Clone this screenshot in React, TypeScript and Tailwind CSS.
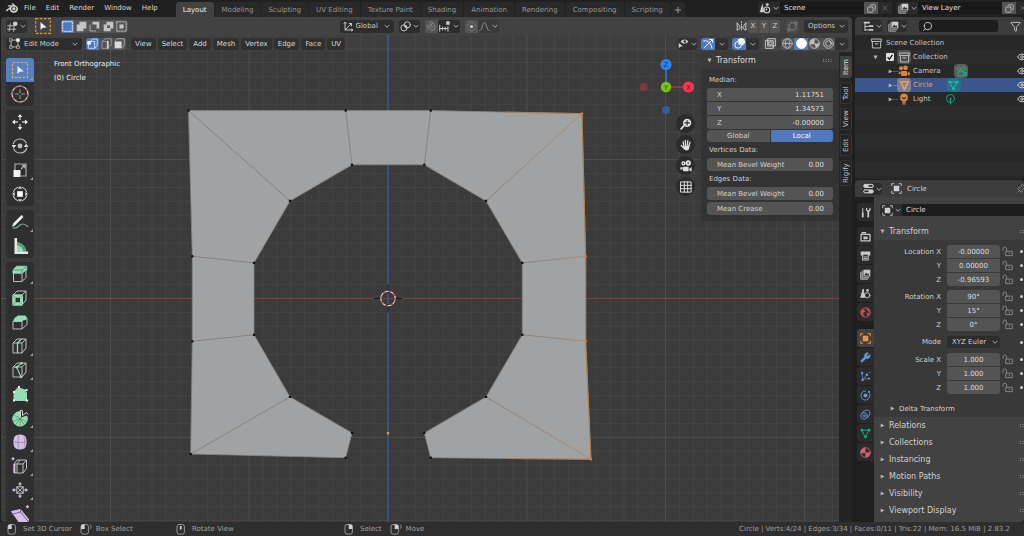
import React from 'react';
import { Copy, Eye, Filter, Magnet, Pin, Search, Wrench, X } from 'lucide-react';
import { SiBlender } from 'react-icons/si';

interface IconProps {
  className?: string;
  children: React.ReactNode;
}

// Base for the small 16 unit icons
const Icon = ({ className = 'size-[11px]', children }: IconProps) => (
  <svg
    viewBox="0 0 16 16"
    className={`shrink-0 ${className}`}
    fill="none"
    stroke="currentColor"
    strokeWidth="1.4"
    strokeLinecap="round"
    strokeLinejoin="round"
    aria-hidden="true"
  >
    {children}
  </svg>
);

const Chevron = ({ className = '' }: { className?: string }) => (
  <svg viewBox="0 0 8 8" className={`size-[6px] shrink-0 ${className}`} fill="none" stroke="#a8a8a8" strokeWidth="1.3" aria-hidden="true">
    <path d="M1 2.5 4 5.8 7 2.5" />
  </svg>
);

const Triangle = ({ open = false }: { open?: boolean }) => (
  <svg viewBox="0 0 6 6" className="size-[5px] shrink-0" fill="#b4b4b4" aria-hidden="true">
    {open ? <path d="M0.5 0.5H5.5L3 5.5Z" /> : <path d="M0.8 0.6 5.4 3 0.8 5.4Z" />}
  </svg>
);

const Grip = () => (
  <svg viewBox="0 0 10 4" className="h-[4px] w-[10px] shrink-0" fill="#8a8a8a" aria-hidden="true">
    {[0, 2.5, 5, 7.5].map((x) => (
      <React.Fragment key={x}>
        <rect x={x} y="0" width="1" height="1" />
        <rect x={x} y="2" width="1" height="1" />
      </React.Fragment>
    ))}
  </svg>
);

const SceneIcon = () => (
  <Icon className="size-[12px]">
    <path d="M4.5 2 1 13.5h6L4.5 2Z" fill="currentColor" stroke="none" />
    <circle cx="10.5" cy="10.5" r="3.8" />
    <circle cx="11" cy="3.4" r="1.9" fill="currentColor" stroke="none" />
    <circle cx="9.8" cy="10" r="1.2" fill="currentColor" stroke="none" />
  </Icon>
);

const LayersIcon = () => (
  <Icon>
    <path d="M1.2 5v9.8H11M3.2 3v9.8H13" strokeWidth="1.1" />
    <rect x="5" y="1" width="10" height="9.8" fill="currentColor" stroke="none" />
    <path d="m6 9.5 3-4.5 2 2.6 1.2-1.3L14 9.5Z" fill="#303030" stroke="none" />
  </Icon>
);

const ObjectIcon = ({ className }: { className?: string }) => (
  <Icon className={className}>
    <rect x="4" y="4" width="8" height="8" fill="currentColor" stroke="none" />
    <path d="M1 4V1h3M12 1h3v3M15 12v3h-3M4 15H1v-3" strokeWidth="1.2" />
  </Icon>
);

const CollectionIcon = () => (
  <Icon>
    <rect x="1" y="1.5" width="14" height="3.5" />
    <path d="M2 5v9.5h12V5M6 8.5h4" />
  </Icon>
);

const CameraIcon = ({ className }: { className?: string }) => (
  <Icon className={className}>
    <g fill="currentColor" stroke="none">
      <circle cx="4" cy="4.4" r="2.6" />
      <circle cx="10" cy="3.8" r="3.2" />
      <rect x="4" y="8" width="8" height="6.5" rx="1" />
      <path d="m12.5 10.5 3-2v6l-3-2ZM3.4 9.5 1 8.2v4.6l2.4-1.2Z" />
    </g>
  </Icon>
);

const CameraDataIcon = () => (
  <Icon>
    <circle cx="4" cy="4.6" r="2.4" />
    <circle cx="10.5" cy="4" r="3" />
    <path d="M3.5 8.5h8v6h-8ZM11.5 11l3.5-2v5.5l-3.5-2" />
  </Icon>
);

const MeshIcon = ({ className }: { className?: string }) => (
  <Icon className={className}>
    <path d="M3 3.2h10L8 13Z" />
    <g fill="currentColor" stroke="none">
      <circle cx="2.8" cy="3" r="2" />
      <circle cx="13.2" cy="3" r="2" />
      <circle cx="8" cy="13" r="2" />
    </g>
  </Icon>
);

const VertexBoxIcon = () => (
  <Icon className="size-[11px]">
    <rect x="3" y="3" width="10" height="10" strokeDasharray="2.5 1.5" />
    <path d="M1 1h3.5v3.5H1ZM1 11.5h3.5V15H1ZM11.5 11.5H15V15h-3.5Z" strokeWidth="1" fill="#2d2d2d" />
    <rect x="10.5" y="0.5" width="5" height="5" fill="#f0f0f0" stroke="none" />
  </Icon>
);

const LockIcon = () => (
  <Icon className="size-[11px] text-[#858585]">
    <rect x="6" y="7.5" width="9" height="6.5" />
    <path d="M1.5 6.5V4.2a2.6 2.6 0 0 1 5.2 0v3M10.5 10v1.5" />
  </Icon>
);

interface IconButtonProps {
  label: string;
  className: string;
  children: React.ReactNode;
}

const IconButton = ({ label, className, children }: IconButtonProps) => (
  <button type="button" aria-label={label} className={`flex h-3 shrink-0 items-center justify-center ${className}`}>
    {children}
  </button>
);

/* ---------- top bar ---------- */

const MENUS = ['File', 'Edit', 'Render', 'Window', 'Help'];
const WORKSPACES = [
  'Layout', 'Modeling', 'Sculpting', 'UV Editing', 'Texture Paint',
  'Shading', 'Animation', 'Rendering', 'Compositing', 'Scripting',
];

interface DataSelectorProps {
  label: string;
  value: string;
  icon: React.ReactNode;
}

const DataSelector = ({ label, value, icon }: DataSelectorProps) => (
  <div className="flex h-3 shrink-0 overflow-hidden rounded-[3px]">
    <IconButton label={`Browse ${label}`} className="w-[22px] gap-[2px] bg-[#2a2a2a]">
      {icon}
      <Chevron />
    </IconButton>
    <input aria-label={label} defaultValue={value} className="h-3 w-[84px] bg-[#191919] px-1 text-[#e0e0e0] outline-none" />
    <IconButton label={`New ${label}`} className="w-[14px] bg-[#545454]">
      <Copy className="size-[9px] -scale-x-100" />
    </IconButton>
    <IconButton label={`Remove ${label}`} className="w-[14px] bg-[#2a2a2a] text-[#707070]">
      <X className="size-[8px]" />
    </IconButton>
  </div>
);

const TopBar = () => (
  <header className="flex h-[17px] shrink-0 items-end overflow-hidden bg-[#202020]">
    <nav className="flex h-full items-center pb-[2px] pl-[6px]">
      <SiBlender className="mr-[1px] size-3 text-[#d0d0d0]" />
      {MENUS.map((menu) => (
        <button key={menu} type="button" className="px-[5px] text-[#d8d8d8]">
          {menu}
        </button>
      ))}
    </nav>
    <div className="ml-[13px] flex gap-px">
      {WORKSPACES.map((name) => (
        <button
          key={name}
          type="button"
          className={
            name === 'Layout'
              ? 'h-[15px] rounded-t-[3px] bg-[#424242] px-[7px] text-[#f0f0f0]'
              : 'h-[15px] rounded-t-[3px] bg-[#292929] px-[7px] text-[#959595]'
          }
        >
          {name}
        </button>
      ))}
      <button type="button" aria-label="Add workspace" className="flex h-[15px] w-[14px] items-center justify-center rounded-t-[3px] bg-[#292929]">
        <svg viewBox="0 0 8 8" className="size-2" stroke="#959595" strokeWidth="1">
          <path d="M4 1v6M1 4h6" />
        </svg>
      </button>
    </div>
    <div className="ml-auto flex h-full w-[266px] gap-1 overflow-hidden pt-[2px]">
      <DataSelector label="Scene" value="Scene" icon={<SceneIcon />} />
      <DataSelector label="View Layer" value="View Layer" icon={<LayersIcon />} />
    </div>
  </header>
);

/* ---------- 3D viewport headers ---------- */

const SelectModes = () => (
  <div className="flex h-[13px] overflow-hidden rounded-[3px] bg-[#545454] text-[#c4c4c4]">
    <button type="button" aria-label="Set selection" className="flex w-[13px] items-center justify-center bg-[#5079be]">
      <Icon><rect x="1" y="1" width="14" height="14" stroke="#dfe8ff" strokeDasharray="2 1.8" /></Icon>
    </button>
    <button type="button" aria-label="Extend selection" className="flex w-[14px] items-center justify-center">
      <Icon><path d="M5 1h10v10h-4v4H1V5h4Z" fill="currentColor" stroke="none" /></Icon>
    </button>
    <button type="button" aria-label="Subtract selection" className="flex w-[13px] items-center justify-center">
      <Icon>
        <path d="M5 1h10v10h-4V5H5Z" fill="currentColor" stroke="none" />
        <path d="M1.5 6v8.5H10" strokeDasharray="1.8 1.8" />
      </Icon>
    </button>
    <button type="button" aria-label="Invert selection" className="flex w-[14px] items-center justify-center">
      <Icon><path d="M5 1h10v10h-4v4H1V5h4ZM6 6v4h4V6Z" fill="currentColor" fillRule="evenodd" stroke="none" /></Icon>
    </button>
    <button type="button" aria-label="Intersect selection" className="flex w-[13px] items-center justify-center">
      <Icon>
        <rect x="5" y="5" width="6" height="6" fill="currentColor" stroke="none" />
        <rect x="1.2" y="1.2" width="13.6" height="13.6" strokeDasharray="2 2" />
      </Icon>
    </button>
  </div>
);

const ToolHeader = () => (
  <div className="relative grid h-[18px] shrink-0 grid-cols-[1fr_auto_1fr] items-center rounded-t-[4px] bg-[#424242] pr-1 pl-[5px]">
    <div className="flex items-center">
      <IconButton label="Editor type" className="h-[13px] w-[21px] gap-[2px] rounded-[3px] bg-[#303030]">
        <Icon>
          <path d="M1 7h9M0 12h13M5 4 3 15M10.5 6 9.5 15" strokeWidth="1.2" />
          <circle cx="12" cy="4" r="3.4" fill="currentColor" stroke="none" />
        </Icon>
        <Chevron />
      </IconButton>
      <svg viewBox="0 0 16 16" className="ml-2 size-4" fill="none" aria-hidden="true">
        <rect x="0.7" y="0.7" width="14.6" height="14.6" stroke="#e39a26" strokeWidth="1.2" strokeDasharray="2.6 1.5" />
        <path d="M5.5 4v8l2.4-2.2 3.8-.3Z" fill="#f0f0f0" />
      </svg>
      <div className="ml-[10px]">
        <SelectModes />
      </div>
    </div>
    <div className="flex items-center gap-[5px] pr-4">
      <div className="relative flex h-[13px] w-[54px] items-center rounded-[3px] bg-[#2d2d2d]">
        <Icon className="absolute left-[3px] size-[11px]">
          <path d="M3 2v11h11M3 13 12 4M1.5 3.5 3 1.5l1.5 2M12.5 11.5l2 1.5-2 1.5M9 3.6h3.4V7" />
        </Icon>
        <select aria-label="Transform orientation" className="h-full w-full appearance-none pl-4 outline-none">
          <option>Global</option>
        </select>
        <Chevron className="pointer-events-none absolute right-1" />
      </div>
      <IconButton label="Pivot point" className="h-[13px] w-[21px] gap-[2px] rounded-[3px] bg-[#2d2d2d]">
        <Icon>
          <circle cx="5.8" cy="10" r="4.5" />
          <circle cx="10.6" cy="5.6" r="4.5" />
          <circle cx="8.2" cy="7.8" r="1.4" fill="currentColor" stroke="none" />
        </Icon>
        <Chevron />
      </IconButton>
      <div className="flex overflow-hidden rounded-[3px]">
        <IconButton label="Snap" className="h-[13px] w-[13px] bg-[#545454]">
          <Magnet className="size-[10px] rotate-90 text-[#909090]" />
        </IconButton>
        <IconButton label="Snap target" className="h-[13px] w-[22px] gap-[3px] bg-[#2d2d2d]">
          <Icon>
            <path d="M1 6v9M1 11h12M5 9v4M9 9v4M13 8v7" />
            <rect x="10.5" y="0.5" width="5" height="5" fill="currentColor" stroke="none" />
          </Icon>
          <Chevron />
        </IconButton>
      </div>
      <div className="flex overflow-hidden rounded-[3px]">
        <IconButton label="Proportional editing" className="h-[13px] w-[13px] bg-[#545454]">
          <Icon>
            <circle cx="8" cy="8" r="6" stroke="#707070" />
            <circle cx="8" cy="8" r="2.2" fill="currentColor" stroke="none" />
          </Icon>
        </IconButton>
        <IconButton label="Falloff" className="h-[13px] w-[21px] gap-[2px] bg-[#3a3a3a] text-[#909090]">
          <Icon><path d="M1 14c4 0 4.2-12 7-12s3 12 7 12" /></Icon>
          <Chevron />
        </IconButton>
      </div>
    </div>
    <div className="flex items-center justify-end">
      <Icon className="size-[11px]">
        <path d="M8 1v14" strokeDasharray="1.5 2" />
        <path d="M5.5 8 1.5 2.5v5L3 8.5l-1.5 1v4L5.5 11ZM10.5 8l4-5.5v5L13 8.5l1.5 1v4L10.5 11Z" />
      </Icon>
      <div className="ml-px flex h-[13px] gap-px overflow-hidden rounded-[3px]">
        {['X', 'Y', 'Z'].map((axis) => (
          <button key={axis} type="button" className="w-[10px] bg-[#545454]">
            {axis}
          </button>
        ))}
      </div>
      <IconButton label="Auto merge" className="ml-[6px] h-[13px] w-[13px] rounded-[3px] bg-[#4c4c4c] text-[#888888]">
        <Icon>
          <path d="M3 5v8h8M5 3h8v8" strokeDasharray="2 1.6" />
          <path d="M1.5 11.5h3v3h-3ZM11.5 1.5h3v3h-3Z" fill="#4c4c4c" strokeWidth="1" />
        </Icon>
      </IconButton>
      <button type="button" className="ml-[5px] flex h-[13px] w-[44px] items-center justify-between rounded-[3px] bg-[#303030] pr-[3px] pl-1">
        Options
        <Chevron />
      </button>
    </div>
  </div>
);

const EDIT_MENUS = ['View', 'Select', 'Add', 'Mesh', 'Vertex', 'Edge', 'Face', 'UV'];

const EditHeader = () => (
  <div className="relative flex h-[17px] shrink-0 items-center justify-between bg-white/[0.02] pr-1 pl-[5px]">
    <div className="flex items-center gap-[2px]">
      <div className="relative mr-[2px] flex h-3 w-[76px] items-center rounded-[3px] bg-[#2d2d2d]">
        <span className="absolute left-[3px]"><VertexBoxIcon /></span>
        <select aria-label="Mode" className="h-full w-full appearance-none pl-[18px] outline-none">
          <option>Edit Mode</option>
        </select>
        <Chevron className="pointer-events-none absolute right-1" />
      </div>
      <div className="mr-[3px] flex overflow-hidden rounded-[3px] bg-[#545454]">
        <IconButton label="Vertex select" className="w-[13px] bg-[#5079be]">
          <Icon>
            <path d="M4 5h7v10H2V7M5 5l3-3.5h7v9L11.5 15" stroke="#c6d6f5" />
            <rect x="0.5" y="4.5" width="5" height="5" fill="#fff" stroke="none" />
          </Icon>
        </IconButton>
        <IconButton label="Edge select" className="w-[14px] text-[#959595]">
          <Icon>
            <path d="M2 5h7v10H2ZM2 5l4-4h9v9l-5 4" />
            <path d="M10 5v10" stroke="#e4e4e4" strokeWidth="2" />
          </Icon>
        </IconButton>
        <IconButton label="Face select" className="w-[13px] text-[#a5a5a5]">
          <Icon>
            <rect x="1" y="5" width="10" height="10" fill="#dcdcdc" stroke="none" />
            <path d="m2 4 3-3h10v9l-3 4" />
          </Icon>
        </IconButton>
      </div>
      {EDIT_MENUS.map((menu) => (
        <button key={menu} type="button" className="h-3 rounded-[3px] bg-[#303030] px-1 text-[#d8d8d8]">
          {menu}
        </button>
      ))}
    </div>
    <div className="flex items-center gap-1">
      <IconButton label="Object visibility" className="w-[20px] gap-[2px] rounded-[3px] bg-[#303030]">
        <Icon>
          <path d="M4 5c2-4 9-4 11 0-2 4-9 4-11 0Z" fill="currentColor" stroke="none" />
          <circle cx="10" cy="5" r="1.8" fill="#303030" stroke="none" />
          <path d="M1 7v8l2.4-2.4 3.6-.6Z" fill="currentColor" stroke="none" />
        </Icon>
        <Chevron />
      </IconButton>
      <div className="flex overflow-hidden rounded-[3px]">
        <IconButton label="Show gizmo" className="w-[14px] bg-[#5079be] text-white">
          <Icon><path d="M1 4c7-1 11 4 12 11M2 14 13 3M9.5 2.2H14V6.5" /></Icon>
        </IconButton>
        <IconButton label="Gizmo settings" className="w-[13px] bg-[#303030]"><Chevron /></IconButton>
      </div>
      <div className="flex overflow-hidden rounded-[3px]">
        <IconButton label="Show overlays" className="w-[14px] bg-[#5079be] text-white">
          <Icon>
            <circle cx="10.5" cy="5.5" r="4.8" fill="currentColor" />
            <circle cx="6" cy="10" r="4.8" fill="#5079be" />
            <circle cx="8.2" cy="7.8" r="2" fill="currentColor" stroke="none" />
          </Icon>
        </IconButton>
        <IconButton label="Overlay settings" className="w-[13px] bg-[#303030]"><Chevron /></IconButton>
      </div>
      <IconButton label="Toggle X-ray" className="w-[14px] rounded-[3px] bg-[#4a4a4a]">
        <Icon>
          <rect x="1" y="4" width="11" height="11" />
          <rect x="4.5" y="1" width="10.5" height="10.5" />
          <rect x="6" y="6" width="4" height="4" />
        </Icon>
      </IconButton>
      <div className="flex overflow-hidden rounded-[3px] bg-[#545454]">
        <IconButton label="Wireframe shading" className="w-[13px] text-[#b4b4b4]">
          <Icon><circle cx="8" cy="8" r="7" /><ellipse cx="8" cy="8" rx="3" ry="7" /><path d="M1 8h14" /></Icon>
        </IconButton>
        <IconButton label="Solid shading" className="w-[14px] bg-[#5079be] text-white">
          <Icon><circle cx="8" cy="8" r="7.2" fill="currentColor" /></Icon>
        </IconButton>
        <IconButton label="Material preview" className="w-[13px] text-[#bcbcbc]">
          <Icon><circle cx="8" cy="8" r="7" /><path d="M8 1a7 7 0 0 0-7 8h7ZM8 8h7a7 7 0 0 1-5 6.5Z" fill="currentColor" stroke="none" /></Icon>
        </IconButton>
        <IconButton label="Rendered shading" className="w-[14px] text-[#bcbcbc]">
          <Icon><circle cx="8" cy="8" r="7" /><circle cx="8" cy="8" r="4.2" /><path d="M9 5c2-1 3 1 2 3" /></Icon>
        </IconButton>
        <IconButton label="Shading settings" className="w-[13px] bg-[#303030]"><Chevron /></IconButton>
      </div>
    </div>
  </div>
);

/* ---------- toolbar ---------- */

const GREEN = '#94dcb4';
const PURPLE = '#d4bfe6';
const CUBE = 'M2 6h9v10H2ZM2 6l4-4h9l-4 4M15 2v9l-4 5';

const TOOLS: Record<string, React.ReactNode> = {
  'Select Box': (
    <>
      <rect x="1.5" y="1.5" width="15" height="15" stroke="#e9ac3f" strokeWidth="1.2" strokeDasharray="2.6 1.4" />
      <path d="M6.5 5v8l2.4-2.4 3.9-.2Z" fill="#f0f0f0" stroke="none" />
    </>
  ),
  Cursor: (
    <>
      <circle cx="9" cy="9" r="8" stroke="#dcdcdc" strokeWidth="1.2" />
      <circle cx="9" cy="9" r="8" stroke="#b04a49" strokeWidth="1.2" strokeDasharray="3.1 3.2" />
      <path d="M9 4v4M9 10v4M4 9h4M10 9h4" stroke="#9a9a9a" />
    </>
  ),
  Move: (
    <>
      <path d="M9 4v3M9 11v3M4 9h3M11 9h3" strokeWidth="1.4" />
      <path d="m9 1 2.4 3H6.6ZM9 17l-2.4-3h4.8ZM1 9l3-2.4v4.8ZM17 9l-3 2.4V6.6Z" fill="#e6e6e6" stroke="none" />
    </>
  ),
  Rotate: (
    <>
      <path d="M2.2 7A7 7 0 0 1 15.4 6.4M15.8 11A7 7 0 0 1 2.6 11.6" strokeWidth="1.2" />
      <path d="M0.6 8h4.6L2.8 11.2ZM12.8 10h4.6L15.2 6.8Z" fill="#e6e6e6" stroke="none" />
      <circle cx="9" cy="9" r="2.4" fill="#bdbdbd" stroke="none" />
    </>
  ),
  Scale: (
    <>
      <path d="M4 9V3h11v12h-5" stroke="#a8a8a8" strokeWidth="1.2" />
      <rect x="2.5" y="9" width="7" height="7" fill="#f0f0f0" stroke="none" />
      <path d="m10 8 3.5-3.5M10.8 4.3h3v3" strokeWidth="1.1" />
    </>
  ),
  Transform: (
    <>
      <circle cx="9" cy="9" r="7" strokeWidth="1.1" />
      <path d="m9 1 2.4 3H6.6ZM9 17l-2.4-3h4.8ZM1 9l3-2.4v4.8ZM17 9l-3 2.4V6.6Z" fill="#e6e6e6" stroke="#2f2f2f" strokeWidth="0.6" />
      <rect x="6.2" y="6.2" width="5.6" height="5.6" fill="#fff" stroke="none" />
    </>
  ),
  Annotate: (
    <>
      <path d="M3 11.5 11.5 3" stroke="#f0f0f0" strokeWidth="2.6" />
      <path d="m1.4 13.2 1-2.2 1.4 1.4Z" fill="#f0f0f0" stroke="#f0f0f0" strokeWidth="0.6" />
      <path d="M1.5 14.5c5 3 6-3.5 10-3.5 3 0 4 2 6 2.5" stroke="#6fae8e" strokeWidth="1.2" />
    </>
  ),
  Measure: (
    <>
      <path d="M6 5.5A9.5 9.5 0 0 1 15 14.5H6Z" fill="#5c9a7b" stroke="#5c9a7b" />
      <path d="M6 8.5a6 6 0 0 1 6 6H6Z" fill={GREEN} stroke="none" />
      <path d="M3.5 1h2.6v13.5h11V17H3.5Z" fill="#e6e6e6" stroke="none" />
    </>
  ),
  'Extrude Region': (
    <>
      <path d="M2.5 8h8.5v8.5H2.5ZM15 4v8.5l-4 4" />
      <path d="M2 5 5.5 1.3h10.2v3L11.5 8H2Z" fill={GREEN} stroke={GREEN} />
      <path d="M2 5h9l4.5-3.5M11 5v3" stroke="#4f7f66" strokeWidth="0.8" />
    </>
  ),
  'Inset Faces': (
    <>
      <path d={CUBE} />
      <rect x="2" y="6" width="9.5" height="10" fill={GREEN} stroke={GREEN} />
      <rect x="4.6" y="8.8" width="4.4" height="4.4" fill="#2f2f2f" stroke="none" />
      <path d="m2 6 2.6 2.8M11.5 6 9 8.8M2 16l2.6-2.8M11.5 16 9 13.2" stroke="#5c9a7b" strokeWidth="0.7" />
    </>
  ),
  Bevel: (
    <>
      <path d="M2 8.5h9V16H2ZM16 5v6.5L11 16" />
      <path d="M2 8.5 3.5 5 7 2.5h7l2 2.5-5 3.5Z" fill={GREEN} stroke="none" />
      <circle cx="13.5" cy="5" r="2.2" fill={GREEN} stroke="none" />
    </>
  ),
  'Loop Cut': (
    <>
      <path d={CUBE} />
      <path d="M6.5 16V6l4-4" stroke={GREEN} strokeWidth="1.3" />
    </>
  ),
  Knife: (
    <>
      <path d={CUBE} />
      <path d="M11 2 5.5 6 10 16" stroke={GREEN} strokeWidth="1.1" />
      <circle cx="10.5" cy="2.2" r="1.2" fill={GREEN} stroke="none" />
      <circle cx="5.5" cy="6.2" r="1.2" fill={GREEN} stroke="none" />
      <circle cx="10" cy="16" r="1.2" fill={GREEN} stroke="none" />
    </>
  ),
  'Poly Build': (
    <>
      <path d="M3 15.5V7l4-4.5 7 2.5 1.5 3v7.5Z" fill={GREEN} stroke={GREEN} />
      <path d="M2 14.5h2v2H2ZM15 14.5h2v2h-2ZM2 6h2v2H2ZM7 1h2v2H7ZM14.5 4h2v2h-2Z" fill="#f0f0f0" stroke="none" />
    </>
  ),
  Spin: (
    <>
      <path d="M9 9.5V2.5A7.3 7.3 0 1 0 15.8 7Z" fill={GREEN} stroke={GREEN} />
      <path d="M9 9.5 2.5 6M9 9.5l-7 3M9 9.5v7M9 9.5l6.5 3.5M9 9.5l-4 6M9 9.5l4 6" stroke="#4c7a63" strokeWidth="0.6" />
      <path d="M9.5 8.5V1.2l2 .6v4.7l4-3 1.5 2" stroke="#cfcfcf" />
    </>
  ),
  Smooth: (
    <>
      <path d="M4 3.5c3-2 7-2 10 0 1.5 3 1.5 8 0 11-3 2-7 2-10 0-1.5-3-1.5-8 0-11Z" fill={PURPLE} stroke={PURPLE} />
      <path d="M8 2.5c-1.5 4-1.5 9 0 13M2.5 8.5c4 1.5 9 1.5 13 0M13 3.5c1 4 1 8 0 11" stroke="#8d7b9e" strokeWidth="0.7" />
    </>
  ),
  'Edge Slide': (
    <>
      <path d="M3 7h9v9H3ZM3 7l3-4h9.5L12 7M15.5 3v8.5L12 16" />
      <path d="M6 16V7l3-4" />
      <path d="M3.5 16V7" stroke={PURPLE} strokeWidth="1.8" />
      <path d="m2 0 1.8 1.8L2 3.6.2 1.8Z" fill={PURPLE} stroke="none" />
    </>
  ),
  'Shrink/Fatten': (
    <>
      <rect x="5.8" y="5.8" width="6.4" height="6.4" strokeWidth="1.1" />
      <path d="m6 6 6 6M12 6l-6 6" strokeWidth="0.9" />
      <path d="M9 3v2M9 13v2M3 9h2M13 9h2" stroke={PURPLE} />
      <path d="m9 0.8 2 2.8H7ZM9 17.2l-2-2.8h4ZM0.8 9l2.8-2v4ZM17.2 9l-2.8 2V7Z" fill={PURPLE} stroke="none" />
    </>
  ),
  Shear: (
    <>
      <path d="M0.5 6.5 9.5 4.5l9 11-9 3.5Z" fill={PURPLE} stroke={PURPLE} />
      <path d="m0.5 9.5 9-2.5 9 11M9.5 7V4.5" stroke="#6d5c7e" strokeWidth="0.9" />
      <path d="m16.5 0 1.8 1.8-1.8 1.8-1.8-1.8Z" fill={PURPLE} stroke="none" />
    </>
  ),
};

const TOOL_GROUPS = [
  ['Select Box', 'Cursor'],
  ['Move', 'Rotate', 'Scale', 'Transform'],
  ['Annotate', 'Measure'],
  [
    'Extrude Region', 'Inset Faces', 'Bevel', 'Loop Cut', 'Knife', 'Poly Build',
    'Spin', 'Smooth', 'Edge Slide', 'Shrink/Fatten', 'Shear',
  ],
];
const HAS_VARIANTS = [
  'Select Box', 'Scale', 'Annotate', 'Extrude Region', 'Loop Cut', 'Knife',
  'Spin', 'Smooth', 'Edge Slide', 'Shrink/Fatten',
];

const Toolbar = () => (
  <div className="relative ml-[5px] flex w-7 shrink-0 flex-col gap-1 overflow-hidden pt-[6px]">
    {TOOL_GROUPS.map((group) => (
      <div key={group[0]} className="flex shrink-0 flex-col overflow-hidden rounded-[3px] bg-[#2f2f2f]">
        {group.map((tool) => (
          <button
            key={tool}
            type="button"
            aria-label={tool}
            className={
              tool === 'Select Box'
                ? 'relative flex h-6 items-center justify-center bg-[#5680c2]'
                : 'relative flex h-6 items-center justify-center'
            }
          >
            <svg viewBox="0 0 18 18" className="size-[18px]" fill="none" stroke="#bcbcbc" strokeWidth="1">
              {TOOLS[tool]}
            </svg>
            {HAS_VARIANTS.includes(tool) && (
              <svg viewBox="0 0 3 3" className="absolute right-[1px] bottom-[2px] size-[3px]" fill="#9a9a9a">
                <path d="M3 0v3H0Z" />
              </svg>
            )}
          </button>
        ))}
      </div>
    ))}
  </div>
);

/* ---------- mesh on the canvas ---------- */

// Positions are in pixels from the 3D cursor
const OUTLINE: [number, number][] = [
  [-199.5, -187.9], [-42.3, -187.9], [42.7, -187.9], [194, -184.9], [197.7, -42.2], [197.7, 42.8],
  [203, 160.8], [42.7, 159.2], [36.3, 134.4], [98, 98.4], [134.3, 36.3], [134.3, -35.6],
  [98, -97.6], [36.3, -133.7], [-36, -133.7], [-98, -97.6], [-134, -35.6], [-134, 36.3],
  [-98, 98.4], [-36, 134.4], [-42.3, 159.2], [-197.3, 155.5], [-195.7, 42.8], [-195.7, -42.2],
];
const INNER_EDGES = [[0, 15], [1, 14], [2, 13], [23, 16], [22, 17], [21, 18]];
const SELECTED_EDGES = [[3, 12], [4, 11], [5, 10], [6, 9]];
const SELECTED = [3, 4, 5, 6];
const GRID_STEP = 13.88;
const GRID_LINES = Array.from({ length: 161 }, (_, i) => i - 80);

const Canvas = () => (
  <svg className="absolute inset-0 h-full w-full" aria-hidden="true">
    <defs>
      {SELECTED_EDGES.map(([a, b]) => (
        <linearGradient
          key={a}
          id={`edge-${a}`}
          gradientUnits="userSpaceOnUse"
          x1={OUTLINE[a][0]}
          y1={OUTLINE[a][1]}
          x2={OUTLINE[b][0]}
          y2={OUTLINE[b][1]}
        >
          <stop offset="0" stopColor="#b58355" />
          <stop offset="1" stopColor="#7c7c7c" />
        </linearGradient>
      ))}
    </defs>
    <g transform="translate(388 281.5)">
      {GRID_LINES.map((i) => (
        <path
          key={i}
          d={`M${i * GRID_STEP} -1200V1200M-1200 ${i * GRID_STEP}H1200`}
          stroke={i % 10 === 0 ? '#4f4f4f' : '#454545'}
          strokeWidth="1"
        />
      ))}
      <path d="M-1200 0H1200" stroke="#8a3b44" />
      <path d="M0 -1200V1200" stroke="#34598c" strokeWidth="1.4" />
      <polygon points={OUTLINE.map((p) => p.join(',')).join(' ')} fill="#a1a2a3" stroke="#858585" strokeWidth="0.8" />
      {INNER_EDGES.map(([a, b]) => (
        <line key={a} x1={OUTLINE[a][0]} y1={OUTLINE[a][1]} x2={OUTLINE[b][0]} y2={OUTLINE[b][1]} stroke="#7c7c7c" strokeWidth="0.8" />
      ))}
      {SELECTED_EDGES.map(([a, b]) => (
        <line key={a} x1={OUTLINE[a][0]} y1={OUTLINE[a][1]} x2={OUTLINE[b][0]} y2={OUTLINE[b][1]} stroke={`url(#edge-${a})`} strokeWidth="0.8" />
      ))}
      <path d="M118 -186.4 194 -184.9 197.7 -42.2V42.8L203 160.8 120 160" fill="none" stroke="#b97f45" strokeWidth="0.9" />
      {OUTLINE.map(([x, y], i) => (
        <rect key={i} x={x - 1.1} y={y - 1.1} width="2.2" height="2.2" fill={SELECTED.includes(i) ? '#ee7d17' : '#0d0d0d'} />
      ))}
      <rect x="-1.2" y="133.4" width="2.4" height="2.4" fill="#f09530" />
      <path d="M-14 0h8.5M5.5 0H14M0 -14v8.5M0 5.5V14" stroke="#161616" />
      <circle r="7.2" fill="none" stroke="#e8e8e8" strokeWidth="1.1" />
      <circle r="7.2" fill="none" stroke="#d2322f" strokeWidth="1.1" strokeDasharray="2.83 2.82" />
    </g>
  </svg>
);

/* ---------- gizmo, sidebar ---------- */

const NAV_BUTTONS: { name: string; icon: React.ReactNode }[] = [
  {
    name: 'Zoom',
    icon: (
      <>
        <circle cx="9.5" cy="6.5" r="5.5" fill="currentColor" stroke="none" />
        <path d="M9.5 3.5v6M6.5 6.5h6" stroke="#2b2b2b" />
        <path d="m1.5 14.5 3.5-4" strokeWidth="2.4" />
      </>
    ),
  },
  {
    name: 'Pan',
    icon: (
      <>
        <path d="M5 9 4.2 4M7.4 8 7 2M9.8 8l.6-5.8M12 9l1.4-4.8M1.6 8.6 5.4 12.5" strokeWidth="1.7" />
        <path d="M4.4 8.6h8.4l-.6 4c-.5 1.6-1.5 2.6-3.4 2.6s-3-.8-4-2.4Z" fill="currentColor" stroke="none" />
      </>
    ),
  },
  {
    name: 'Camera view',
    icon: (
      <>
        <g fill="currentColor" stroke="none">
          <circle cx="4.5" cy="4.5" r="2.8" />
          <circle cx="11" cy="4" r="3.6" />
          <rect x="4" y="9" width="7.5" height="6" rx="1" />
          <path d="m12.3 11.5 3.2-2v6l-3.2-2ZM0.5 9.5h3v3h-3Z" />
        </g>
        <circle cx="11" cy="4" r="1.1" fill="#2b2b2b" stroke="none" />
        <circle cx="4.5" cy="4.5" r="0.9" fill="#2b2b2b" stroke="none" />
      </>
    ),
  },
  {
    name: 'Toggle perspective',
    icon: <path d="M1.2 1.2h13.6v13.6H1.2ZM5.8 1.2v13.6M10.2 1.2v13.6M1.2 5.8h13.6M1.2 10.2h13.6" strokeWidth="1.3" />,
  },
];

const NavigationGizmo = () => (
  <div className="relative flex w-[63px] shrink-0 flex-col">
    <svg viewBox="0 0 60 64" className="mt-[5px] h-16 w-[60px]" fontFamily="DejaVu Sans, sans-serif" fontSize="7" textAnchor="middle" aria-hidden="true">
      <path d="M28 30V8" stroke="#2f7fe0" strokeWidth="1.4" />
      <path d="M28 30h22" stroke="#b82f45" strokeWidth="1.4" />
      <circle cx="5.5" cy="30" r="4" fill="#853741" />
      <circle cx="28" cy="53" r="4" fill="#335d94" />
      <circle cx="28" cy="7.5" r="5.6" fill="#2b83f0" />
      <circle cx="28" cy="30" r="5.2" fill="#7cc20a" />
      <circle cx="50.5" cy="30" r="5.6" fill="#f73453" />
      <text x="28" y="10" fill="#123d75">Z</text>
      <text x="28" y="32.5" fill="#2f5000">Y</text>
      <text x="50.5" y="32.5" fill="#7a1526">X</text>
    </svg>
    <div className="-mt-[7px] ml-[38px] flex flex-col gap-[2px]">
      {NAV_BUTTONS.map((button) => (
        <button key={button.name} type="button" aria-label={button.name} className="flex size-[19px] items-center justify-center rounded-full bg-[#2b2b2b] text-[#dedede]">
          <Icon className="size-3">{button.icon}</Icon>
        </button>
      ))}
    </div>
  </div>
);

const SliderField = ({ label, value }: { label: string; value: string }) => (
  <label className="flex h-[13px] items-center bg-[#545454] pr-[9px] pl-[10px] first:rounded-t-[3px] last:rounded-b-[3px]">
    <span className="flex-1 whitespace-nowrap">{label}</span>
    <input defaultValue={value} className="w-9 text-right text-[#dedede] outline-none" />
  </label>
);

const TransformPanel = () => (
  <section className="w-[138px] shrink-0 self-start rounded-b-[3px] bg-[#333333] text-[#d0d0d0]">
    <div className="flex h-[17px] items-center bg-[#3a3a3a] pr-[6px] pl-[6px] text-[#dcdcdc]">
      <Triangle open />
      <h2 className="ml-1 flex-1 text-[8px]">Transform</h2>
      <Grip />
    </div>
    <div className="flex flex-col px-[6px] pb-[6px]">
      <p className="pt-[7px] pb-1 pl-[2px] leading-[8px]">Median:</p>
      <div className="flex flex-col gap-px">
        <SliderField label="X" value="1.11751" />
        <SliderField label="Y" value="1.34573" />
        <SliderField label="Z" value="-0.00000" />
      </div>
      <div className="mt-px flex h-3 gap-px overflow-hidden rounded-[3px]">
        <button type="button" className="flex-1 bg-[#545454]">Global</button>
        <button type="button" className="flex-1 bg-[#5079be] text-white">Local</button>
      </div>
      <p className="pt-1 pb-1 pl-[2px] leading-[8px]">Vertices Data:</p>
      <div><SliderField label="Mean Bevel Weight" value="0.00" /></div>
      <p className="pt-1 pb-1 pl-[2px] leading-[8px]">Edges Data:</p>
      <div><SliderField label="Mean Bevel Weight" value="0.00" /></div>
      <div className="mt-[2px]"><SliderField label="Mean Crease" value="0.00" /></div>
    </div>
  </section>
);

const SIDE_TABS = [
  { name: 'Item', className: 'h-[22px] bg-[#424242] text-[#e0e0e0]' },
  { name: 'Tool', className: 'h-[22px] border border-[#353535]' },
  { name: 'View', className: 'h-[22px] border border-[#353535]' },
  { name: 'Edit', className: 'h-[22px] border border-[#353535]' },
  { name: 'Rigify', className: 'h-[26px] border border-[#353535]' },
];

const SideTabs = () => (
  <div className="flex w-[13px] shrink-0 flex-col gap-1 bg-[#242424] pt-1 pl-px text-[#c4c4c4]">
    {SIDE_TABS.map((tab) => (
      <button
        key={tab.name}
        type="button"
        className={`flex w-3 shrink-0 rotate-180 items-center justify-center rounded-l-[3px] [writing-mode:vertical-rl] ${tab.className}`}
      >
        {tab.name}
      </button>
    ))}
  </div>
);

const Viewport = () => (
  <main className="relative ml-px flex min-w-0 flex-1 flex-col overflow-hidden rounded-[4px] bg-[#3b3b3b]">
    <div className="absolute inset-0 -ml-px"><Canvas /></div>
    <ToolHeader />
    <div className="relative flex min-h-0 flex-1 flex-col">
      <EditHeader />
      <div className="flex min-h-0 flex-1">
        <Toolbar />
        <div className="relative min-w-0 flex-1 pt-[7px] pl-5 text-[#f0f0f0]">
          <p className="leading-[10px]">Front Orthographic</p>
          <p className="mt-1 leading-[10px]">(0) Circle</p>
        </div>
        <NavigationGizmo />
        <TransformPanel />
        <SideTabs />
      </div>
    </div>
  </main>
);

/* ---------- outliner ---------- */

const EyeButton = () => (
  <button type="button" aria-label="Hide in viewport" className="absolute right-[-3px] text-[#c8c8c8]">
    <Eye className="size-[10px]" strokeWidth={2.4} />
  </button>
);

const OutlinerHeader = () => (
  <div className="flex h-[18px] shrink-0 items-center overflow-hidden rounded-t-[4px] bg-[#3c3c3c] pl-[7px]">
    <IconButton label="Editor type" className="w-[20px] gap-[2px] rounded-[3px] bg-[#2d2d2d]">
      <Icon>
        <path d="M3 3v11M3 8h4M3 13h4" />
        <path d="M1 2.5h9M8 7.5h7M8 13h7" strokeWidth="2.6" strokeLinecap="butt" />
      </Icon>
      <Chevron />
    </IconButton>
    <IconButton label="Display mode" className="ml-[5px] w-[20px] gap-[2px] rounded-[3px] bg-[#2d2d2d]">
      <LayersIcon />
      <Chevron />
    </IconButton>
    <label className="ml-3 flex h-3 w-[79px] shrink-0 items-center rounded-[3px] bg-[#1d1d1d] pl-[3px]">
      <Search className="size-[11px] -scale-x-100" />
      <input type="search" aria-label="Filter" className="min-w-0 flex-1 outline-none" />
    </label>
    <button type="button" aria-label="Filter settings" className="ml-3 shrink-0">
      <Filter className="size-[11px]" />
    </button>
  </div>
);

const Outliner = () => (
  <section className="flex h-[162px] shrink-0 flex-col overflow-hidden rounded-[4px] bg-[#282828]">
    <OutlinerHeader />
    <ul className="flex flex-1 flex-col pt-px text-[#c4c4c4] *:relative *:flex *:h-[14px] *:shrink-0 *:items-center">
      <li className="pl-4">
        <CollectionIcon />
        <span className="ml-1">Scene Collection</span>
      </li>
      <li className="bg-[#2c2c2c] pl-[18px]">
        <Triangle open />
        <span className="relative ml-2 flex size-2">
          <input type="checkbox" defaultChecked aria-label="Collection" className="size-2 appearance-none rounded-[1px] bg-[#e0e0e0]" />
          <svg viewBox="0 0 8 8" className="pointer-events-none absolute inset-0 size-2" fill="none" stroke="#1a1a1a" strokeWidth="1.3">
            <path d="m1.6 4.2 1.8 2 3-4.4" />
          </svg>
        </span>
        <span className="ml-[3px] flex size-[14px] items-center justify-center rounded-[3px] bg-[#4e4e4e]"><CollectionIcon /></span>
        <span className="ml-[2px]">Collection</span>
        <EyeButton />
      </li>
      <li className="pl-[33px]">
        <Triangle />
        <span className="h-px w-[5px] bg-[#555555]" />
        <span className="text-[#d98440]"><CameraIcon className="size-3" /></span>
        <span className="ml-[3px]">Camera</span>
        <span className="ml-[14px] flex size-[14px] items-center justify-center rounded-[4px] bg-[#5b5b5b] text-[#17b389]">
          <CameraDataIcon />
        </span>
        <EyeButton />
      </li>
      <li className="bg-[#3b568c] pl-[33px]">
        <Triangle />
        <span className="h-px w-[4px] bg-[#7080a0]" />
        <span className="flex size-[14px] items-center justify-center rounded-[3px] bg-[#7b8196] text-[#f09a5c]">
          <Icon><path d="M2.5 2.5h11L8 14Z" strokeWidth="2.4" /></Icon>
        </span>
        <span className="ml-[2px] text-[#eca244]">Circle</span>
        <span className="ml-[14px] flex size-[14px] items-center justify-center rounded-[4px] bg-[#2c6f8b] text-[#12c79c]">
          <MeshIcon />
        </span>
        <EyeButton />
      </li>
      <li className="pl-[33px]">
        <Triangle />
        <span className="h-px w-[5px] bg-[#555555]" />
        <span className="text-[#d98440]">
          <Icon className="size-3">
            <circle cx="8" cy="6" r="5.2" fill="currentColor" stroke="none" />
            <path d="M6 12.2h4M6.6 14.6h2.8" strokeWidth="1.6" />
            <path d="M6 6c1 2 3 2 4 0" stroke="#282828" />
          </Icon>
        </span>
        <span className="ml-[3px]">Light</span>
        <span className="ml-[15px] text-[#17a67e]">
          <Icon><circle cx="8" cy="6.5" r="5.8" /><path d="M8 8v7" /><circle cx="8" cy="7" r="1.5" fill="currentColor" stroke="none" /></Icon>
        </span>
        <EyeButton />
      </li>
      <li className="bg-[#2c2c2c]" />
      <li />
      <li className="bg-[#2c2c2c]" />
      <li />
      <li className="bg-[#2c2c2c]" />
    </ul>
  </section>
);

/* ---------- properties ---------- */

interface PropertyTab {
  name: string;
  className: string;
  icon: React.ReactNode;
}

const PROPERTY_TABS: PropertyTab[] = [
  {
    name: 'Tool',
    className: 'mt-[6px] bg-[#2b2b2b] text-[#c8c8c8]',
    icon: <><path d="M4 2v6" /><path d="M4 9v5M12 6v8" strokeWidth="2.6" /><path d="M9.5 2v2.5L12 6.5l2.5-2V2" strokeWidth="1.8" /></>,
  },
  {
    name: 'Render',
    className: 'mt-[5px] bg-[#2b2b2b] text-[#c8c8c8]',
    icon: <><rect x="1.5" y="5" width="13" height="9.5" strokeWidth="1.8" /><path d="M3 2.5h5" strokeWidth="2.4" /><rect x="5" y="8" width="6" height="4" fill="currentColor" stroke="none" /></>,
  },
  {
    name: 'Output',
    className: 'bg-[#2b2b2b] text-[#c8c8c8]',
    icon: <><path d="M1 2h14v6H1Z" fill="currentColor" stroke="none" /><path d="M4 7v7.5h8V7" strokeWidth="1.6" fill="#2b2b2b" /><path d="M6 10h4M6 12.3h4" /></>,
  },
  {
    name: 'View Layer',
    className: 'bg-[#2b2b2b] text-[#c8c8c8]',
    icon: <><path d="M1.2 5v9.8H11M3.2 3v9.8H13" /><rect x="5" y="1" width="10" height="9.8" fill="currentColor" stroke="none" /><path d="m6 9.5 3-4.5 2 2.6 1.2-1.3L14 9.5Z" fill="#303030" stroke="none" /></>,
  },
  {
    name: 'Scene',
    className: 'bg-[#2b2b2b] text-[#c8c8c8]',
    icon: <><path d="M4.5 2 1 13.5h6L4.5 2Z" fill="currentColor" /><circle cx="10.5" cy="10.5" r="3.8" /><circle cx="11" cy="3.4" r="1.9" fill="currentColor" stroke="none" /></>,
  },
  {
    name: 'World',
    className: 'bg-[#2b2b2b] text-[#c4535e]',
    icon: <><circle cx="8" cy="8" r="6.8" /><path d="M2.5 4.5c3-1 5 0 4.5 2s-3 1-3 3 2 2 2 4L2 11ZM10 1.8c-1 3 2 4 4.5 4.5L12.5 3ZM10 9c3-1 4 1 2 4Z" fill="currentColor" strokeWidth="1" /></>,
  },
  {
    name: 'Object',
    className: 'mt-[7px] bg-[#424242] text-[#ee9342]',
    icon: <><rect x="4" y="4" width="8" height="8" fill="currentColor" stroke="none" /><path d="M1 4V1h3M12 1h3v3M15 12v3h-3M4 15H1v-3" /></>,
  },
  { name: 'Modifiers', className: 'bg-[#2b2b2b] text-[#6795d6]', icon: null },
  {
    name: 'Particles',
    className: 'bg-[#2b2b2b] text-[#6795d6]',
    icon: <><path d="M4 12 3 4M4 12l8-1M4 12l6-6" strokeWidth="1" /><g fill="currentColor" stroke="none"><circle cx="3" cy="3" r="1.8" /><circle cx="3.6" cy="13" r="1.8" /><circle cx="10" cy="5.5" r="2" /><circle cx="13" cy="11" r="1.6" /><circle cx="14" cy="2" r="1" /></g></>,
  },
  {
    name: 'Physics',
    className: 'bg-[#2b2b2b] text-[#6795d6]',
    icon: <><path d="M14 5.5A6.6 6.6 0 1 1 8 1.4" /><circle cx="8" cy="8" r="3" fill="currentColor" stroke="none" /><circle cx="13" cy="2.8" r="1.6" fill="currentColor" stroke="none" /></>,
  },
  {
    name: 'Object Constraints',
    className: 'bg-[#2b2b2b] text-[#6795d6]',
    icon: <><circle cx="6" cy="10" r="4.8" /><circle cx="6" cy="10" r="1.5" /><path d="M3.5 5.5C5 1 13 0 14.5 4.5c.7 3-1.5 6-4 8" /></>,
  },
  {
    name: 'Object Data',
    className: 'bg-[#2b2b2b] text-[#10b283]',
    icon: <><path d="M3 3.2h10L8 13Z" /><g fill="currentColor" stroke="none"><circle cx="2.8" cy="3" r="2" /><circle cx="13.2" cy="3" r="2" /><circle cx="8" cy="13" r="2" /></g></>,
  },
  {
    name: 'Material',
    className: 'bg-[#2b2b2b] text-[#d4646d]',
    icon: <><circle cx="8" cy="8" r="7" /><path d="M8 1a7 7 0 0 0-7 8h7ZM8 8h7a7 7 0 0 1-7 7Z" fill="currentColor" stroke="none" /></>,
  },
];

const PropertyTabs = () => (
  <nav className="flex w-[17px] shrink-0 flex-col gap-px">
    {PROPERTY_TABS.map((tab) => (
      <button key={tab.name} type="button" aria-label={tab.name} className={`flex h-[18px] shrink-0 items-center justify-center rounded-l-[3px] ${tab.className}`}>
        {tab.icon ? <Icon>{tab.icon}</Icon> : <Wrench className="size-[11px]" fill="currentColor" />}
      </button>
    ))}
  </nav>
);

const VECTORS = {
  location: { label: 'Location', values: ['-0.00000', '0.00000', '-0.96593'] },
  rotation: { label: 'Rotation', values: ['90°', '15°', '0°'] },
  scale: { label: 'Scale', values: ['1.000', '1.000', '1.000'] },
};

const Dot = () => <span className="ml-auto size-[3px] shrink-0 rounded-full bg-[#c8c8c8]" />;

const VectorField = ({ label, values }: { label: string; values: string[] }) => (
  <div className="flex flex-col gap-px">
    {values.map((value, i) => (
      <div key={i} className="group flex h-[13px] items-center">
        <label className="flex h-full items-center">
          <span className="w-[67px] text-right">{i === 0 ? `${label} X` : 'XYZ'[i]}</span>
          <input
            defaultValue={value}
            className="ml-[6px] h-full w-[53px] bg-[#545454] text-center text-[#dedede] outline-none group-first:rounded-t-[3px] group-last:rounded-b-[3px]"
          />
        </label>
        <button type="button" aria-label={`Lock ${label} ${'XYZ'[i]}`} className="ml-[2px]"><LockIcon /></button>
        <Dot />
      </div>
    ))}
  </div>
);

const CLOSED_PANELS = ['Relations', 'Collections', 'Instancing', 'Motion Paths', 'Visibility', 'Viewport Display'];

const Properties = () => (
  <section className="mt-px flex min-h-0 flex-1 flex-col overflow-hidden rounded-[4px] bg-[#1f1f1f] text-[#d0d0d0]">
    <div className="flex h-[17px] shrink-0 items-center bg-[#3c3c3c] pl-2">
      <IconButton label="Editor type" className="w-[19px] gap-[2px] rounded-[3px] bg-[#2d2d2d]">
        <Icon>
          <rect x="1" y="2" width="14" height="4.5" rx="2" fill="currentColor" />
          <rect x="1" y="10" width="14" height="4.5" rx="2" fill="currentColor" />
          <path d="M9 4.2h4M3 12.2h4" stroke="#2d2d2d" strokeWidth="2.4" />
        </Icon>
        <Chevron />
      </IconButton>
      <span className="ml-[9px]"><ObjectIcon /></span>
      <span className="ml-[5px]">Circle</span>
      <button type="button" aria-label="Pin" className="-mr-[2px] ml-auto text-[#909090]"><Pin className="size-[10px] rotate-45" /></button>
    </div>
    <div className="flex min-h-0 flex-1 pl-[2px]">
      <PropertyTabs />
      <div className="flex min-w-0 flex-1 flex-col bg-[#424242]">
        <div className="mt-[7px] ml-[6px] flex h-3 shrink-0 overflow-hidden rounded-l-[3px]">
          <IconButton label="Browse object" className="w-[22px] gap-[2px] bg-[#2d2d2d]">
            <ObjectIcon />
            <Chevron />
          </IconButton>
          <input aria-label="Object name" defaultValue="Circle" className="h-3 min-w-0 flex-1 bg-[#1d1d1d] pl-1 text-[#dedede] outline-none" />
        </div>
        <div className="mt-[7px] flex h-[17px] shrink-0 items-center overflow-hidden pl-[6px]">
          <Triangle open />
          <h2 className="ml-1 flex-1 text-[8px]">Transform</h2>
          <span className="-mr-[6px]"><Grip /></span>
        </div>
        <div className="flex shrink-0 flex-col gap-1 bg-[#393939] pt-[5px] pr-[1px]">
          <VectorField {...VECTORS.location} />
          <VectorField {...VECTORS.rotation} />
          <div className="flex h-[14px] items-center">
            <label htmlFor="rotation-mode" className="w-[67px] text-right">Mode</label>
            <div className="relative ml-[6px] flex h-3 w-[53px] items-center rounded-[3px] bg-[#2d2d2d]">
              <select id="rotation-mode" className="h-full w-full appearance-none pl-[5px] outline-none">
                <option>XYZ Euler</option>
              </select>
              <Chevron className="pointer-events-none absolute right-[2px]" />
            </div>
            <Dot />
          </div>
          <VectorField {...VECTORS.scale} />
          <button type="button" className="mt-[2px] flex h-[17px] items-center gap-1 pl-4">
            <Triangle />
            Delta Transform
          </button>
        </div>
        {CLOSED_PANELS.map((panel) => (
          <button key={panel} type="button" className="flex h-[17px] shrink-0 items-center overflow-hidden pl-[6px] text-left text-[8px]">
            <Triangle />
            <span className="ml-1 flex-1">{panel}</span>
            <span className="-mr-[6px]"><Grip /></span>
          </button>
        ))}
      </div>
    </div>
  </section>
);

/* ---------- status bar ---------- */

const MouseIcon = ({ button, drag = false }: { button: 'left' | 'middle' | 'right'; drag?: boolean }) => (
  <svg viewBox="0 0 12 12" className="size-3 shrink-0" fill="none" stroke="#a4a4a4" strokeWidth="0.9" aria-hidden="true">
    <rect x="1" y="1.5" width="7.4" height="9.6" rx="2" />
    {button === 'left' && <path d="M1 6V3.5a2 2 0 0 1 2-2h1.7V6Z" fill="#d0d0d0" stroke="none" />}
    {button === 'middle' && <path d="M4.7 3v3.6" stroke="#d0d0d0" strokeWidth="1.8" />}
    {button === 'right' && <path d="M4.7 1.5h1.7a2 2 0 0 1 2 2V6H4.7Z" fill="#d0d0d0" stroke="none" />}
    {drag && <path d="M10.2 1.5c1.2 1.2 1.2 3 0 4.2" />}
  </svg>
);

const StatusBar = () => (
  <footer className="flex h-[14px] shrink-0 items-center bg-[#2e2e2e] pr-[14px] pl-[7px] text-[#a0a0a0]">
    <div className="flex w-[169px] items-center">
      <MouseIcon button="left" />
      <span className="ml-1 whitespace-nowrap">Set 3D Cursor</span>
      <span className="ml-2 flex"><MouseIcon button="left" drag /></span>
      <span className="ml-1 whitespace-nowrap">Box Select</span>
    </div>
    <div className="flex w-[168px] items-center">
      <MouseIcon button="middle" />
      <span className="ml-1 whitespace-nowrap">Rotate View</span>
    </div>
    <div className="flex items-center">
      <MouseIcon button="right" />
      <span className="ml-1">Select</span>
      <span className="ml-2 flex"><MouseIcon button="right" drag /></span>
      <span className="ml-1">Move</span>
    </div>
    <p className="ml-auto whitespace-nowrap">
      Circle | Verts:4/24 | Edges:3/34 | Faces:0/11 | Tris:22 | Mem: 16.5 MiB | 2.83.2
    </p>
  </footer>
);

const App: React.FC = () => {
  return (
    <div className="flex h-screen flex-col overflow-hidden bg-[#1f1f1f] font-['DejaVu_Sans',sans-serif] text-[7px] leading-[10px] text-[#cccccc]">
      <TopBar />
      <div className="flex min-h-0 flex-1">
        <Viewport />
        <aside className="ml-[3px] flex w-[169px] shrink-0 flex-col">
          <Outliner />
          <Properties />
        </aside>
      </div>
      <StatusBar />
    </div>
  );
};

export default App;
